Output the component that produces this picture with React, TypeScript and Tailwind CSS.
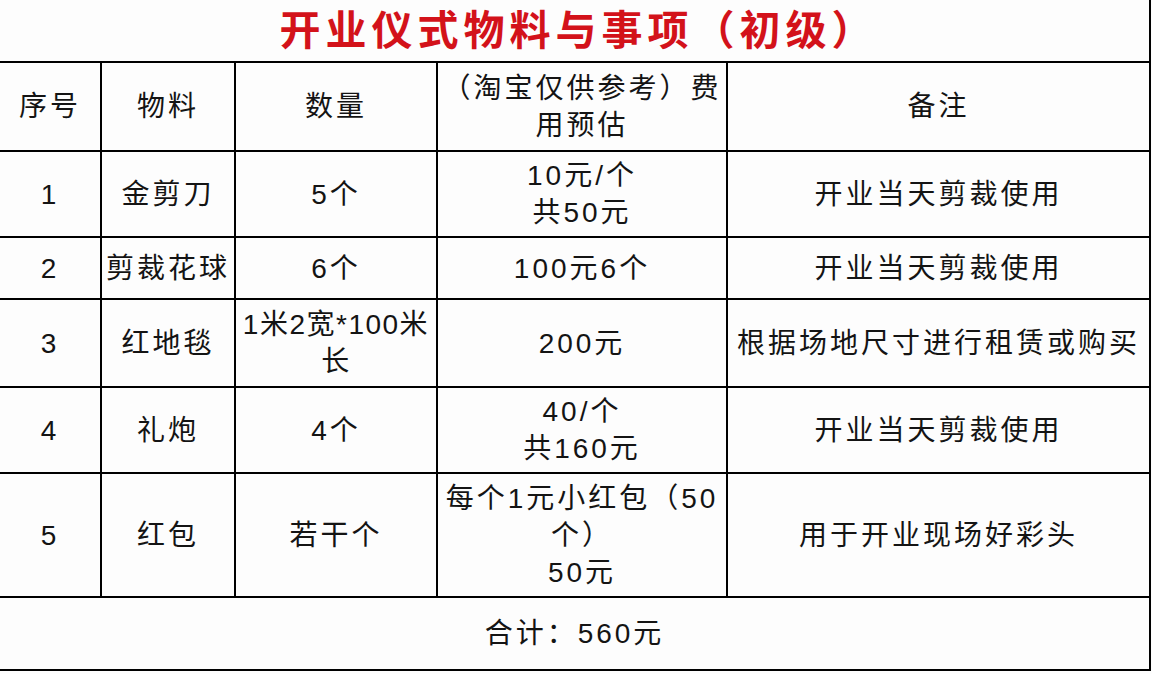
const rows = [
  { no: "1", item: "金剪刀", qty: "5个", cost: ["10元/个", "共50元"], note: "开业当天剪裁使用", h: "h-[86px]" },
  { no: "2", item: "剪裁花球", qty: "6个", cost: ["100元6个"], note: "开业当天剪裁使用", h: "h-[62px]" },
  { no: "3", item: "红地毯", qty: "1米2宽*100米长", cost: ["200元"], note: "根据场地尺寸进行租赁或购买", h: "h-[88px]" },
  { no: "4", item: "礼炮", qty: "4个", cost: ["40/个", "共160元"], note: "开业当天剪裁使用", h: "h-[86px]" },
  { no: "5", item: "红包", qty: "若干个", cost: ["每个1元小红包（50个）", "50元"], note: "用于开业现场好彩头", h: "h-[124px]" },
]

export default function App() {
  return (
    <div
      className="w-[1152px] h-[674px] bg-[#fdfdfd] overflow-hidden text-[#141414]"
      style={{ fontFamily: '"Liberation Sans", "Noto Sans CJK SC", sans-serif' }}
    >
      <table className="w-[1151px] table-fixed border-collapse text-[28px] tracking-[3px] leading-[37px] text-center">
        <colgroup>
          <col className="w-[101px]" />
          <col className="w-[134px]" />
          <col className="w-[202px]" />
          <col className="w-[290px]" />
          <col />
        </colgroup>
        <tbody>
          <tr className="h-[62px]">
            <td colSpan={5} className="border-r-2 border-b-2 border-black p-0 pl-[8px] align-middle">
              <span className="text-[41px] font-bold tracking-[5px] text-[#d3121a] leading-[48px]">
                开业仪式物料与事项（初级）
              </span>
            </td>
          </tr>
          <tr className="h-[89px]">
            <Cell first>序号</Cell>
            <Cell>物料</Cell>
            <Cell>数量</Cell>
            <Cell>（淘宝仅供参考）费用预估</Cell>
            <Cell last>备注</Cell>
          </tr>
          {rows.map((r) => (
            <tr key={r.no} className={r.h}>
              <Cell first>{r.no}</Cell>
              <Cell>{r.item}</Cell>
              <Cell>
                <span className={r.qty.length > 6 ? "tracking-[1.5px]" : ""}>{r.qty}</span>
              </Cell>
              <Cell>
                {r.cost.map((c, i) => (
                  <div key={i}>{c}</div>
                ))}
              </Cell>
              <Cell last>{r.note}</Cell>
            </tr>
          ))}
          <tr className="h-[73px]">
            <td colSpan={5} className="border-2 border-l-0 border-black p-0 align-middle rounded-br-md">
              合计：560元
            </td>
          </tr>
        </tbody>
      </table>
    </div>
  )
}

function Cell({ children, first, last }: { children: React.ReactNode; first?: boolean; last?: boolean }) {
  return (
    <td
      className={
        "border-2 border-black px-0 py-0 align-middle " + (first ? "border-l-0 " : "") + (last ? "border-r-2 " : "")
      }
    >
      {children}
    </td>
  )
}
